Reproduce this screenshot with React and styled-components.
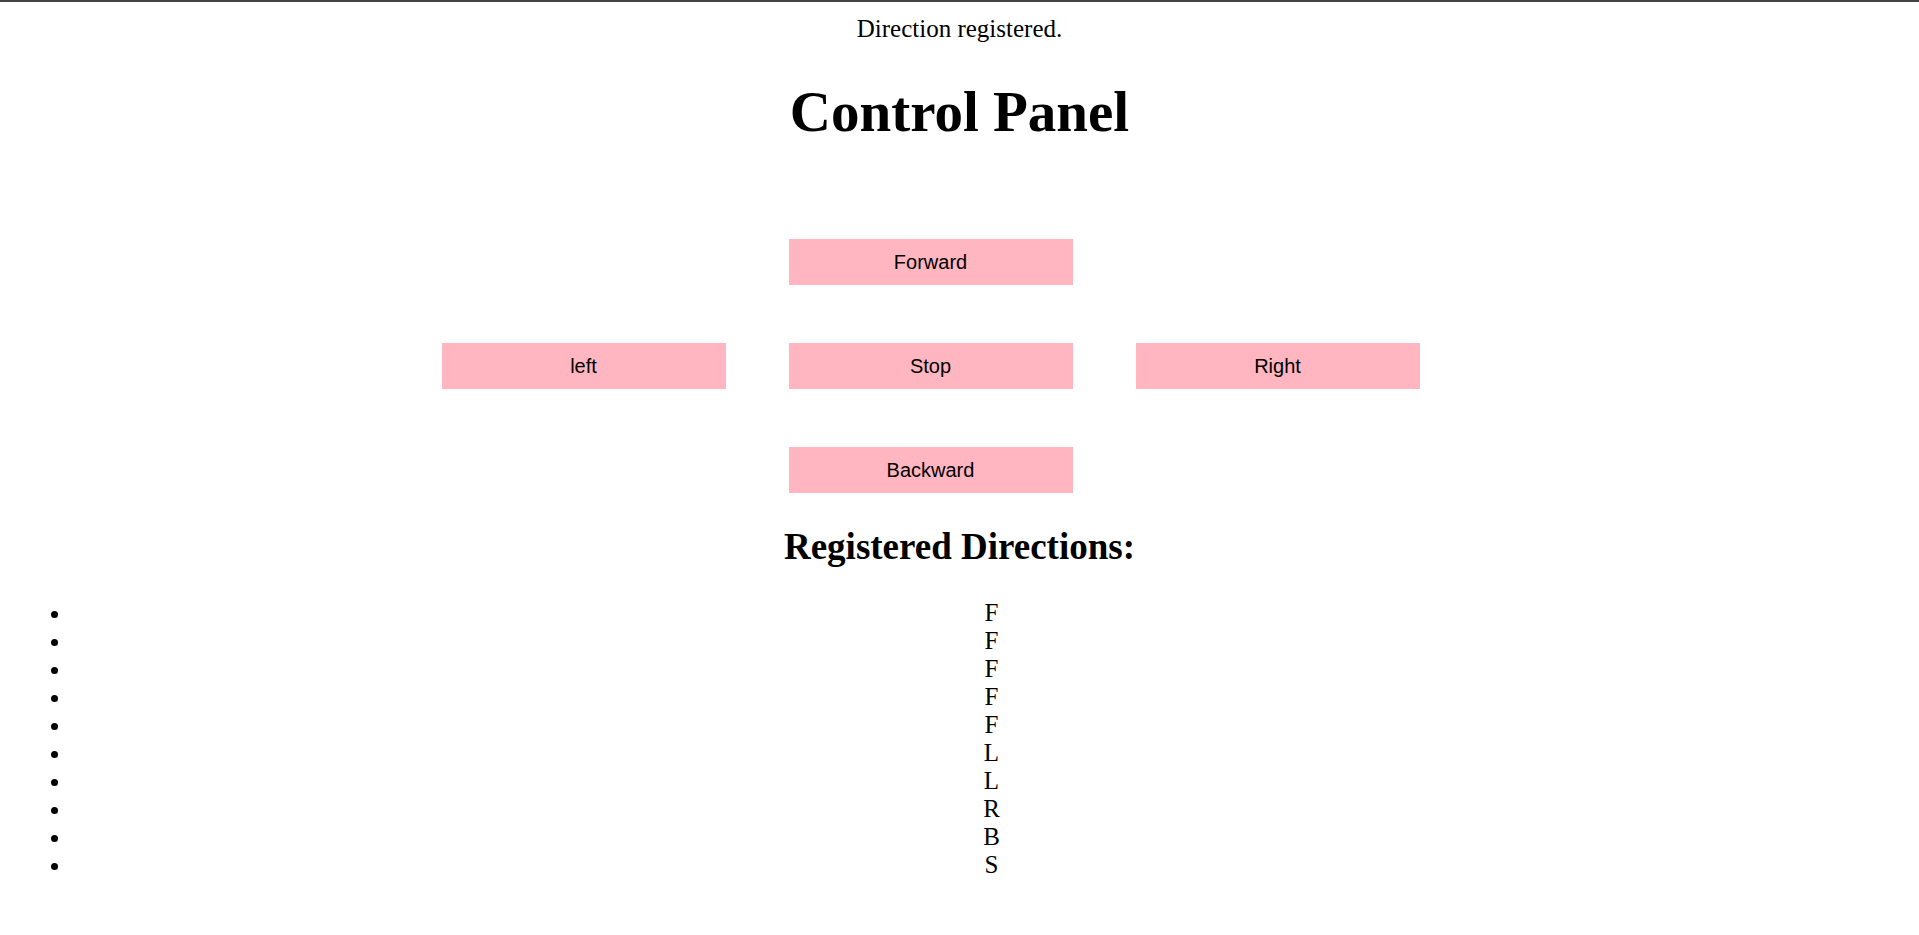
import styled, { createGlobalStyle } from "styled-components";

const GlobalStyle = createGlobalStyle`
  html, body {
    margin: 0;
    padding: 0;
    background: #fff;
  }
  body {
    font-family: "Liberation Serif", "Times New Roman", serif;
    color: #000;
  }
`;

const buttons = [
  { label: "Forward", col: 2, row: 1 },
  { label: "left", col: 1, row: 2 },
  { label: "Stop", col: 2, row: 2 },
  { label: "Right", col: 3, row: 2 },
  { label: "Backward", col: 2, row: 3 },
];

const directions = ["F", "F", "F", "F", "F", "L", "L", "R", "B", "S"];

const App = () => {
  return (
    <>
      <GlobalStyle />
      <Page>
        <Status>Direction registered.</Status>
        <Title>Control Panel</Title>

        <Pad>
          {buttons.map((b) => (
            <DirButton key={b.label} type="button" $col={b.col} $row={b.row}>
              {b.label}
            </DirButton>
          ))}
        </Pad>

        <SubTitle>Registered Directions:</SubTitle>
        <DirList>
          {directions.map((d, i) => (
            <li key={i}>{d}</li>
          ))}
        </DirList>
      </Page>
    </>
  );
};
export default App;

const Page = styled.div`
  border-top: 2px solid #444;
  padding: 0 8px 40px;
  min-height: 100vh;
  box-sizing: border-box;
`;

const Status = styled.p`
  margin: 12px 0 0;
  font-size: 25px;
  line-height: 29px;
  text-align: center;
`;

const Title = styled.h1`
  margin: 37px 0 0;
  font-size: 57px;
  line-height: 64px;
  font-weight: 700;
  text-align: center;
`;

const Pad = styled.div`
  display: grid;
  grid-template-columns: repeat(3, 284px);
  grid-template-rows: repeat(3, 46px);
  column-gap: 63px;
  row-gap: 58px;
  justify-content: center;
  padding-right: 58px;
  margin-top: 95px;
`;

const DirButton = styled.button`
  grid-column: ${(p) => p.$col};
  grid-row: ${(p) => p.$row};
  border: none;
  background-color: #ffb6c1;
  color: #000;
  font-family: "Liberation Sans", Arial, sans-serif;
  font-size: 20px;
  padding: 0;
  cursor: pointer;
`;

const SubTitle = styled.h2`
  margin: 33px 0 0;
  font-size: 37px;
  line-height: 42px;
  font-weight: 700;
  text-align: center;
`;

const DirList = styled.ul`
  margin: 31px 0 0;
  padding-left: 64px;
  font-size: 25px;
  line-height: 28px;
  text-align: center;
  list-style: disc;
`;
